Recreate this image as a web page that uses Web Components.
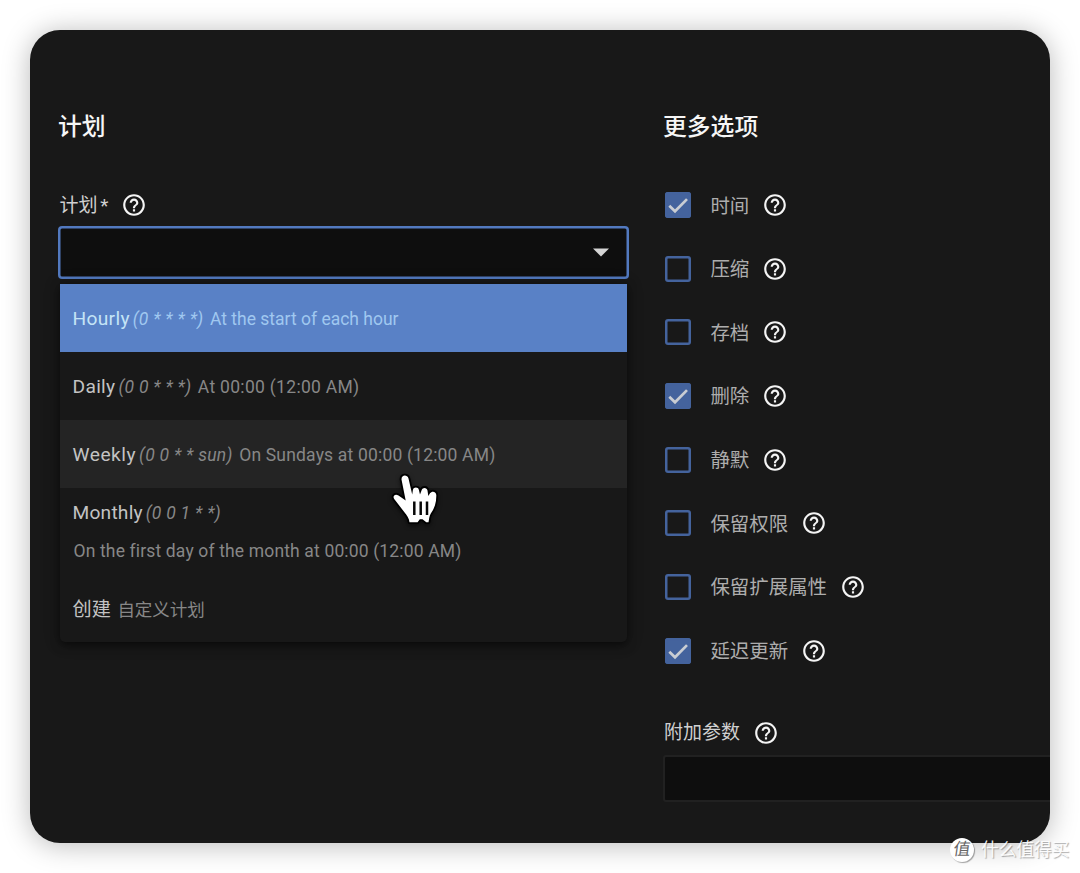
<!DOCTYPE html>
<html lang="zh-CN">
<head>
<meta charset="utf-8">
<title>计划</title>
<style>
html,
body {
  margin: 0;
  height: 100%;
  background: #fff;
}

body {
  font-family: Roboto, "Noto Sans CJK SC", sans-serif;
  overflow: hidden;
}
</style>
</head>
<body>
<schedule-page></schedule-page>

<script>
function define(name, html) {
  const $template = document.createElement("template");
  $template.innerHTML = html;

  class Component extends HTMLElement {
    constructor() {
      super();
      const shadowRoot = this.attachShadow({ mode: "open" });
      shadowRoot.appendChild($template.content.cloneNode(true));
    }
  }

  window.customElements.define(name, Component);
}

define("help-icon", `
<style>
:host {
  display: block;
  flex: none;
  width: 26px;
  height: 26px;
  color: #f4f4f4;
}

svg {
  display: block;
}
</style>
<svg width="26" height="26" viewBox="0 0 24 24" fill="currentColor">
  <path d="M11 18h2v-2h-2v2zm1-16C6.48 2 2 6.48 2 12s4.48 10 10 10 10-4.48 10-10S17.52 2 12 2zm0 18c-4.41 0-8-3.59-8-8s3.59-8 8-8 8 3.59 8 8-3.59 8-8 8zm0-14c-2.21 0-4 1.79-4 4h2c0-1.1.9-2 2-2s2 .9 2 2c0 2-3 1.75-3 5h2c0-2.25 3-2.5 3-5 0-2.21-1.79-4-4-4z"/>
</svg>
`);

define("section-title", `
<style>
:host {
  display: block;
  height: 36px;
  font-size: 23.8px;
  font-weight: 500;
  line-height: 38px;
  color: #f6f6f6;
}
</style>
<slot></slot>
`);

define("field-label", `
<style>
:host {
  display: flex;
  align-items: center;
  gap: 13px;
  height: 28px;
  font-size: 19px;
  line-height: 28px;
  color: #d0d0d0;
}

span {
  padding-top: 1px;
  word-spacing: -2px;
}
</style>
<span><slot></slot></span>
<help-icon></help-icon>
`);

define("check-option", `
<style>
:host {
  display: flex;
  align-items: center;
  height: 28px;
  font-size: 19.45px;
  line-height: 28px;
  color: #adadad;
}

.box {
  width: 26px;
  height: 26px;
  margin-right: 19px;
  border-radius: 3px;
  box-shadow: inset 0 0 0 2.5px #44639d;
  flex: none;
}

:host([checked]) .box {
  background: #44639d;
}

svg {
  display: none;
}

:host([checked]) svg {
  display: block;
}

span {
  padding-top: 3px;
}

help-icon {
  margin-left: 13px;
}
</style>
<div class="box">
  <svg width="26" height="26" viewBox="0 0 26 26">
    <path d="M4.3 13.8 10 19.3 22 7.1" fill="none" stroke="#c9cdd3" stroke-width="2.7"/>
  </svg>
</div>
<span><slot></slot></span>
<help-icon></help-icon>
`);

define("select-box", `
<style>
:host {
  display: block;
  position: relative;
}

.control {
  height: 53px;
  padding-right: 20px;
  border-radius: 4px;
  background: #0e0e0e;
  box-shadow: inset 0 0 0 2.5px #5279bf;
  box-sizing: border-box;
  display: flex;
  align-items: center;
  justify-content: flex-end;
}

.menu {
  position: absolute;
  top: 58px;
  left: 2px;
  right: 2px;
  border-radius: 0 0 5px 5px;
  background: #181818;
  box-shadow: 0 3px 8px rgba(0, 0, 0, .5), 0 1px 16px rgba(0, 0, 0, .25);
  overflow: hidden;
}
</style>
<div class="control">
  <svg width="16" height="9" viewBox="0 0 16 9"><path d="M0 .5h16L8 8.5z" fill="#d4d4d4"/></svg>
</div>
<div class="menu"><slot></slot></div>
`);

define("select-item", `
<style>
:host {
  display: flex;
  align-items: center;
  height: 68px;
  padding: 2px 0 0 12.500px;
  box-sizing: border-box;
  white-space: nowrap;
  line-height: 28px;
  color: #878787;
  font-size: 17.5px;
}

:host([active]) {
  background: #5981c6;
  color: #a0c8f0;
  --name: #c4e4f6;
}

:host([hover]) {
  background: #242424;
}

:host([stacked]) {
  height: 87px;
  padding-top: 11px;
  flex-wrap: wrap;
  align-content: flex-start;
  row-gap: 10px;
}

:host([stacked]) .text {
  flex-basis: 100%;
  margin-left: 1px;
}

:host([last]) {
  height: 67px;
}

.name {
  font-size: 19.2px;
  letter-spacing: var(--name-gap, .3px);
  color: var(--name, #c3c3c3);
}

::slotted([slot="cron"]) {
  margin-left: 3px;
  font-style: italic;
  letter-spacing: .27px;
}

.text {
  margin-left: 6.500px;
  letter-spacing: var(--text-gap, .3px);
}
</style>
<span class="name"><slot name="name"></slot></span>
<slot name="cron"></slot>
<span class="text"><slot></slot></span>
`);

define("text-field", `
<style>
:host {
  display: block;
}

.input {
  height: 47px;
  margin-top: 8px;
  border: 2px solid #212121;
  border-right: 0;
  border-radius: 3px 0 0 3px;
  background: #0e0e0e;
  box-sizing: border-box;
}

field-label {
  margin-left: 1px;
}
</style>
<field-label><slot></slot></field-label>
<div class="input"></div>
`);

define("hand-cursor", `
<style>
:host {
  display: block;
}

svg {
  display: block;
  overflow: visible;
  filter: drop-shadow(0 2px 2px rgba(0, 0, 0, .55));
}
</style>
<svg width="50" height="56" viewBox="0 0 50 56">
  <path d="M12.5 8.500C12.200 3.800 18.200 3.200 19.500 7.500L23.200 23.500L23.900 19C24.600 15.800 29.200 15.800 29.900 19L31 23.500L32.700 19C33.600 16 38 16.200 38.500 19.500L39.300 25L41 22.300C42.800 19.500 47.500 20.300 47.300 24.500C47.400 32 45.500 37.500 41.800 42.500C40.200 45 40.200 48 39.500 51.300L37.300 51.300L33.500 48.200L30.800 48.200L28.600 51.300H20.500C20.200 47.500 18 44.300 15.200 41L5.200 28C3.200 24.800 6.200 22.300 9.500 24.500L16.700 29.500Z" fill="#fff" stroke="#000" stroke-width="3.600" paint-order="stroke" stroke-linejoin="round"/>
  <path d="M25.300 30.500v13.500M31.700 30.500v13.500M38 30.500v13.500" stroke="#080808" stroke-width="2.500"/>
</svg>
`);

define("site-mark", `
<style>
:host {
  display: flex;
  align-items: center;
  gap: 7px;
  color: #fff;
  font-size: 17.7px;
  line-height: 26px;
  white-space: nowrap;
}

.badge {
  width: 24px;
  height: 24px;
  border-radius: 50%;
  background: #fff;
  box-shadow: 1px 1px 1px rgba(0, 0, 0, .35);
  color: #666;
  font-size: 17px;
  line-height: 23px;
  text-align: center;
}

.badge span {
  display: block;
  transform: skewX(-8deg);
}

.name {
  color: rgba(255, 255, 255, .92);
  text-shadow: 1px 1px 1px rgba(0, 0, 0, .32);
}
</style>
<span class="badge"><span>值</span></span>
<span class="name"><slot></slot></span>
`);

define("schedule-page", `
<style>
:host {
  display: block;
  position: relative;
  height: 873px;
  padding: 29.500px 30px;
  box-sizing: border-box;
}

.card {
  display: grid;
  grid-template-columns: 571px 1fr;
  column-gap: 34px;
  height: 813.500px;
  padding: 78.500px 0 0 28px;
  border-radius: 30px;
  background: #181818;
  box-shadow: 0 2px 28px rgba(0, 0, 0, .28);
  box-sizing: border-box;
  overflow: hidden;
}

.plan field-label {
  margin: 47px 0 7px 1.500px;
}

.options {
  display: flex;
  flex-direction: column;
  gap: 35.670px;
  margin: 47px 0 54px 2.400px;
}

hand-cursor {
  position: absolute;
  left: 389px;
  top: 471px;
}

site-mark {
  position: absolute;
  left: 950px;
  top: 837px;
}
</style>
<div class="card">
  <section class="plan">
    <section-title>计划</section-title>
    <field-label>计划 *</field-label>
    <select-box>
      <select-item active style="--text-gap: 0">
        <span slot="name">Hourly</span>
        <span slot="cron">(0 * * * *)</span>
        At the start of each hour
      </select-item>
      <select-item>
        <span slot="name">Daily</span>
        <span slot="cron">(0 0 * * *)</span>
        At 00:00 (12:00 AM)
      </select-item>
      <select-item hover style="--name-gap: .5px; --text-gap: .18px">
        <span slot="name">Weekly</span>
        <span slot="cron">(0 0 * * sun)</span>
        On Sundays at 00:00 (12:00 AM)
      </select-item>
      <select-item stacked style="--name-gap: .2px; --text-gap: .15px">
        <span slot="name">Monthly</span>
        <span slot="cron">(0 0 1 * *)</span>
        On the first day of the month at 00:00 (12:00 AM)
      </select-item>
      <select-item last style="--name-gap: 0; --text-gap: 0">
        <span slot="name">创建</span>
        自定义计划
      </select-item>
    </select-box>
  </section>
  <section class="more">
    <section-title>更多选项</section-title>
    <div class="options">
      <check-option checked>时间</check-option>
      <check-option>压缩</check-option>
      <check-option>存档</check-option>
      <check-option checked>删除</check-option>
      <check-option>静默</check-option>
      <check-option>保留权限</check-option>
      <check-option>保留扩展属性</check-option>
      <check-option checked>延迟更新</check-option>
    </div>
    <text-field>附加参数</text-field>
  </section>
</div>
<hand-cursor></hand-cursor>
<site-mark>什么值得买</site-mark>
`);
</script>
</body>
</html>
